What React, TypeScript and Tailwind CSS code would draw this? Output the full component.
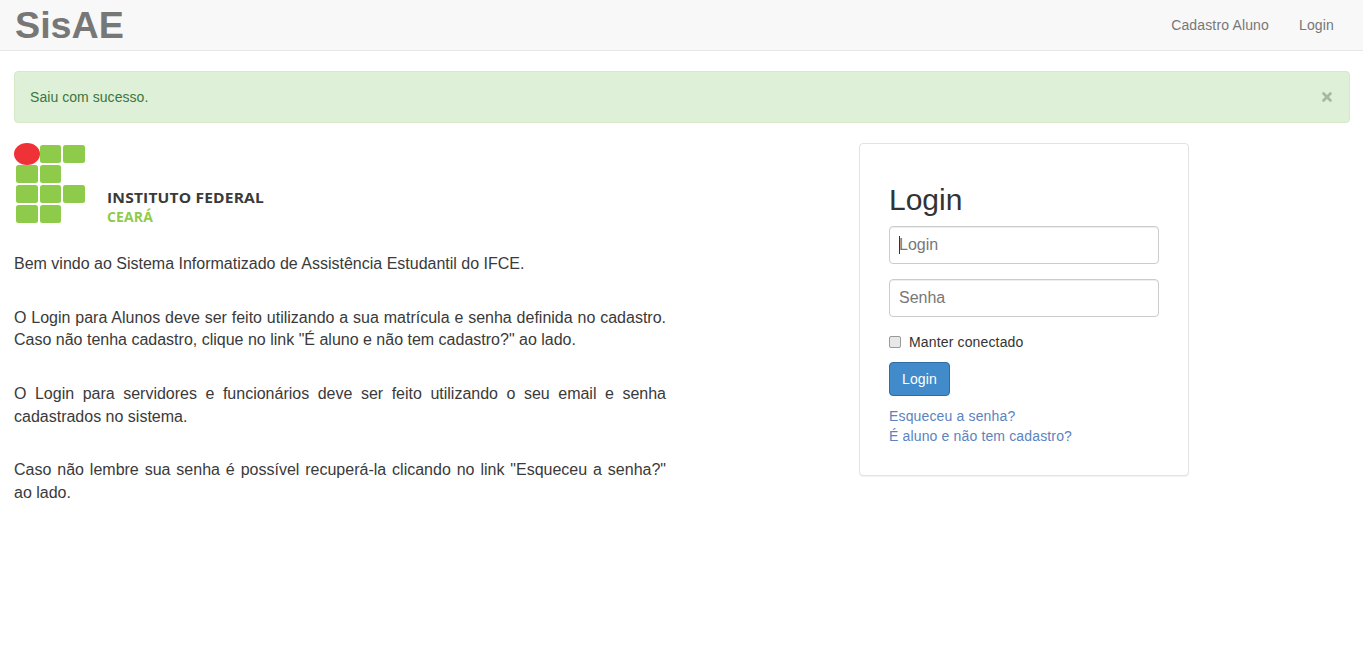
import { X } from 'lucide-react';

function Logo() {
  return (
    <svg width="252" height="84" viewBox="0 0 252 84" className="block">
      <g fill="#8fcb4a">
        <rect x="26" y="2" width="21" height="18" rx="2.5" />
        <rect x="49" y="2" width="22" height="18" rx="2.5" />
        <rect x="2" y="22" width="22" height="18" rx="2.5" />
        <rect x="26" y="22" width="21" height="18" rx="2.5" />
        <rect x="2" y="42" width="22" height="18" rx="2.5" />
        <rect x="26" y="42" width="21" height="18" rx="2.5" />
        <rect x="49" y="42" width="22" height="18" rx="2.5" />
        <rect x="2" y="62" width="22" height="18" rx="2.5" />
        <rect x="26" y="62" width="21" height="18" rx="2.5" />
      </g>
      <ellipse cx="13" cy="11" rx="13" ry="11" fill="#ef3237" />
      <text x="93" y="60" fontSize="14.5" fontWeight="700" fill="#3a3a3a" fontFamily="'Open Sans', sans-serif" textLength="157" lengthAdjust="spacingAndGlyphs">
        INSTITUTO FEDERAL
      </text>
      <text x="93" y="79" fontSize="14.5" fontWeight="700" fill="#8fcb4a" fontFamily="'Open Sans', sans-serif" textLength="46" lengthAdjust="spacingAndGlyphs">
        CEARÁ
      </text>
    </svg>
  );
}

export default function App() {
  return (
    <div className="min-h-[648px] bg-white text-[14px] leading-[20px] tracking-[0.15px] text-[#333] font-['Liberation_Sans',Arial,sans-serif]">
      <nav className="h-[51px] flex items-center justify-between bg-[#f8f8f8] border-b border-[#e7e7e7] pl-[15px] pr-[14px]">
        <a className="text-[37.7px] leading-[50px] tracking-normal font-bold text-[#777]">SisAE</a>
        <div className="flex h-full items-center text-[#777]">
          <a className="px-[15px]">Cadastro Aluno</a>
          <a className="px-[15px]">Login</a>
        </div>
      </nav>

      <div className="px-[13px] pt-5">
        <div className="ml-px h-[52px] flex items-center justify-between rounded border border-[#d6e9c6] bg-[#dff0d8] text-[#3c763d] pl-[15px] pr-[15px]">
          <span className="tracking-[0.05px]">Saiu com sucesso.</span>
          <X className="h-[14px] w-[14px] text-[#a7b8a2]" strokeWidth={4.5} />
        </div>

        <div className="flex items-start mt-5 ml-px">
          <div className="w-[652px]">
            <Logo />
            <div className="mt-[26px] text-[16px] leading-[22.857px] tracking-normal text-justify text-[#3a3a3a]">
              <p>Bem vindo ao Sistema Informatizado de Assistência Estudantil do IFCE.</p>
              <p className="mt-[30.7px]">
                O Login para Alunos deve ser feito utilizando a sua matrícula e senha definida no cadastro.
                Caso não tenha cadastro, clique no link "É aluno e não tem cadastro?" ao lado.
              </p>
              <p className="mt-[30.7px]">
                O Login para servidores e funcionários deve ser feito utilizando o seu email e senha
                cadastrados no sistema.
              </p>
              <p className="mt-[30.7px]">
                Caso não lembre sua senha é possível recuperá-la clicando no link "Esqueceu a senha?"
                ao lado.
              </p>
            </div>
          </div>

          <div className="ml-[193px] w-[330px] h-[333px] rounded border border-[#e3e3e3] bg-white shadow-[0_1px_1px_rgba(0,0,0,0.05)] px-[29px] pt-[39px]">
            <h2 className="text-[30px] leading-[33px] tracking-normal font-normal">Login</h2>
            <div className="mt-[10px] flex flex-col gap-[15px]">
              <div className="relative">
                <input
                  placeholder="Login"
                  className="block h-[38px] w-full rounded border border-[#ccc] px-[9px] text-[16px] tracking-normal shadow-[inset_0_1px_1px_rgba(0,0,0,0.075)] placeholder:text-[#777] outline-none"
                />
                <span className="absolute left-[10px] top-[10px] h-[18px] w-px bg-[#333]" />
              </div>
              <input
                placeholder="Senha"
                className="block h-[38px] w-full rounded border border-[#ccc] px-[9px] text-[16px] tracking-normal shadow-[inset_0_1px_1px_rgba(0,0,0,0.075)] placeholder:text-[#777] outline-none"
              />
            </div>
            <label className="mt-[15px] flex items-center gap-2">
              <span className="h-3 w-3 rounded-[2px] border border-[#999] bg-[#e8e8e8]" />
              Manter conectado
            </label>
            <button className="mt-[10px] block h-[34px] w-[61px] rounded border border-[#2e6da4] bg-[#428bca] text-white">
              Login
            </button>
            <div className="mt-[10px] text-[#5b83c0]">
              <a className="block">Esqueceu a senha?</a>
              <a className="block">É aluno e não tem cadastro?</a>
            </div>
          </div>
        </div>
      </div>
    </div>
  );
}
